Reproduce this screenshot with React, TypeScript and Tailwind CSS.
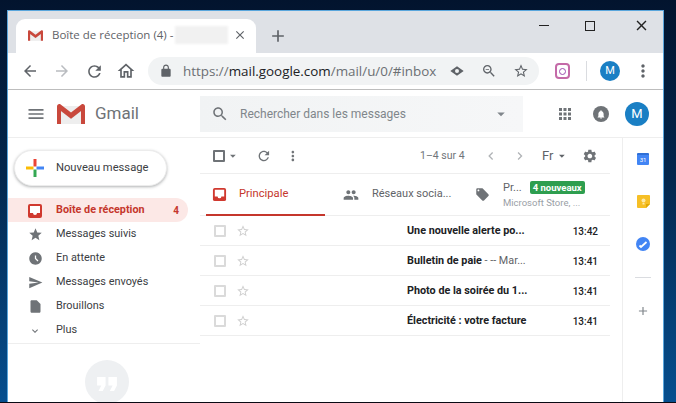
import type { ReactNode } from 'react';

const paths = {
  menu: 'M3 18h18v-2H3v2zm0-5h18v-2H3v2zm0-7v2h18V6H3z',
  search: 'M15.5 14h-.79l-.28-.27C15.41 12.59 16 11.11 16 9.5 16 5.91 13.09 3 9.5 3S3 5.91 3 9.5 5.91 16 9.5 16c1.61 0 3.09-.59 4.23-1.57l.27.28v.79l5 4.99L20.49 19l-4.99-5zm-6 0C7.01 14 5 11.99 5 9.5S7.01 5 9.5 5 14 7.01 14 9.5 11.99 14 9.5 14z',
  star: 'M12 17.27L18.18 21l-1.64-7.03L22 9.24l-7.19-.61L12 2 9.19 8.63 2 9.24l5.46 4.73L5.82 21z',
  starOutline: 'M22 9.24l-7.19-.62L12 2 9.19 8.63 2 9.24l5.46 4.73L5.82 21 12 17.27 18.18 21l-1.63-7.03L22 9.24zM12 15.4l-3.76 2.27 1-4.28-3.32-2.88 4.38-.38L12 6.1l1.71 4.04 4.38.38-3.32 2.88 1 4.28L12 15.4z',
  clock: 'M11.99 2C6.47 2 2 6.48 2 12s4.47 10 9.99 10C17.52 22 22 17.52 22 12S17.52 2 11.99 2zm3.3 14.71L11 12.41V7h2v4.59l3.71 3.71-1.42 1.41z',
  send: 'M2.01 21L23 12 2.01 3 2 10l15 2-15 2z',
  draft: 'M14 2H6c-1.1 0-2 .9-2 2v16c0 1.1.9 2 2 2h12c1.1 0 2-.9 2-2V8l-6-6z',
  people: 'M16 11c1.66 0 2.99-1.34 2.99-3S17.66 5 16 5c-1.66 0-3 1.34-3 3s1.34 3 3 3zm-8 0c1.66 0 2.99-1.34 2.99-3S9.66 5 8 5C6.34 5 5 6.34 5 8s1.34 3 3 3zm0 2c-2.33 0-7 1.17-7 3.5V19h14v-2.5c0-2.33-4.67-3.5-7-3.5zm8 0c-.29 0-.62.02-.97.05 1.16.84 1.97 1.97 1.97 3.45V19h6v-2.5c0-2.33-4.67-3.5-7-3.5z',
  tag: 'M21.41 11.58l-9-9C12.05 2.22 11.55 2 11 2H4c-1.1 0-2 .9-2 2v7c0 .55.22 1.05.59 1.42l9 9c.36.36.86.58 1.41.58.55 0 1.05-.22 1.41-.59l7-7c.37-.36.59-.86.59-1.41 0-.55-.23-1.06-.59-1.42zM5.5 7C4.67 7 4 6.33 4 5.5S4.67 4 5.5 4 7 4.67 7 5.5 6.33 7 5.5 7z',
  gear: 'M19.14 12.94c.04-.3.06-.61.06-.94 0-.32-.02-.64-.07-.94l2.03-1.58c.18-.14.23-.41.12-.61l-1.92-3.32c-.12-.22-.37-.29-.59-.22l-2.39.96c-.5-.38-1.03-.7-1.62-.94l-.36-2.54c-.04-.24-.24-.41-.48-.41h-3.84c-.24 0-.43.17-.47.41l-.36 2.54c-.59.24-1.13.57-1.62.94l-2.39-.96c-.22-.08-.47 0-.59.22L2.74 8.87c-.12.21-.08.47.12.61l2.03 1.58c-.05.3-.09.63-.09.94s.02.64.07.94l-2.03 1.58c-.18.14-.23.41-.12.61l1.92 3.32c.12.22.37.29.59.22l2.39-.96c.5.38 1.03.7 1.62.94l.36 2.54c.05.24.24.41.48.41h3.84c.24 0 .44-.17.47-.41l.36-2.54c.59-.24 1.13-.56 1.62-.94l2.39.96c.22.08.47 0 .59-.22l1.92-3.32c.12-.22.07-.47-.12-.61l-2.01-1.58zM12 15.6c-1.98 0-3.6-1.62-3.6-3.6s1.62-3.6 3.6-3.6 3.6 1.62 3.6 3.6-1.62 3.6-3.6 3.6z',
  refresh: 'M17.65 6.35C16.2 4.9 14.21 4 12 4c-4.42 0-7.99 3.58-7.99 8s3.57 8 7.99 8c3.73 0 6.84-2.55 7.73-6h-2.08c-.82 2.33-3.04 4-5.65 4-3.31 0-6-2.69-6-6s2.69-6 6-6c1.66 0 3.14.69 4.22 1.78L13 11h7V4l-2.35 2.35z',
  lock: 'M18 8h-1V6c0-2.76-2.24-5-5-5S7 3.24 7 6v2H6c-1.1 0-2 .9-2 2v10c0 1.1.9 2 2 2h12c1.1 0 2-.9 2-2V10c0-1.1-.9-2-2-2zM9 6c0-1.66 1.34-3 3-3s3 1.34 3 3v2H9V6z',
  back: 'M20 11H7.83l5.59-5.59L12 4l-8 8 8 8 1.41-1.41L7.83 13H20v-2z',
  forward: 'M12 4l-1.41 1.41L16.17 11H4v2h12.17l-5.58 5.59L12 20l8-8z',
  home: 'M12 5.69l5 4.5V18h-2v-6H9v6H7v-7.81l5-4.5M12 3L2 12h3v8h6v-6h2v6h6v-8h3L12 3z',
  dots: 'M12 8c1.1 0 2-.9 2-2s-.9-2-2-2-2 .9-2 2 .9 2 2 2zm0 2c-1.1 0-2 .9-2 2s.9 2 2 2 2-.9 2-2-.9-2-2-2zm0 6c-1.1 0-2 .9-2 2s.9 2 2 2 2-.9 2-2-.9-2-2-2z',
  grid: 'M4 8h4V4H4v4zm6 12h4v-4h-4v4zm-6 0h4v-4H4v4zm0-6h4v-4H4v4zm6 0h4v-4h-4v4zm6-10v4h4V4h-4zm-6 4h4V4h-4v4zm6 6h4v-4h-4v4zm0 6h4v-4h-4v4z',
  plus: 'M19 13h-6v6h-2v-6H5v-2h6V5h2v6h6v2z',
  close: 'M19 6.41L17.59 5 12 10.59 6.41 5 5 6.41 10.59 12 5 17.59 6.41 19 12 13.41 17.59 19 19 17.59 13.41 12z',
  caret: 'M7 10l5 5 5-5z',
  chevronL: 'M15.41 7.41L14 6l-6 6 6 6 1.41-1.41L10.83 12z',
  chevronR: 'M10 6L8.59 7.41 13.17 12l-4.58 4.59L10 18l6-6z',
  chevronD: 'M7.41 8.59L12 13.17l4.59-4.58L18 10l-6 6-6-6z',
  zoomOut: 'M15.5 14h-.79l-.28-.27C15.41 12.59 16 11.11 16 9.5 16 5.91 13.09 3 9.5 3S3 5.91 3 9.5 5.91 16 9.5 16c1.61 0 3.09-.59 4.23-1.57l.27.28v.79l5 4.99L20.49 19l-4.99-5zm-6 0C7.01 14 5 11.99 5 9.5S7.01 5 9.5 5 14 7.01 14 9.5 11.99 14 9.5 14zM7 9h5v1H7z',
  eye: 'M12 5L2 12l10 7 10-7-10-7zm0 10a3 3 0 1 1 0-6 3 3 0 0 1 0 6z',
  bell: 'M12 20c.9 0 1.6-.7 1.6-1.6h-3.2c0 .9.7 1.6 1.6 1.6zm4.5-4v-4c0-2.4-1.3-4.4-3.4-4.9V6.6c0-.6-.5-1.1-1.1-1.1s-1.1.5-1.1 1.1v.5C8.800 7.600 7.500 9.600 7.500 12v4l-1.200 1.200v.6h11.400v-.6L16.500 16z',
  quote: 'M6 17h3l2-4V7H5v6h3zm8 0h3l2-4V7h-6v6h3z',
};

function Icon({ name, className }: { name: keyof typeof paths; className: string }) {
  return (
    <svg viewBox="0 0 24 24" fill="currentColor" className={className}>
      <path d={paths[name]} />
    </svg>
  );
}

function InboxIcon({ className }: { className: string }) {
  return (
    <svg viewBox="0 0 16 16" className={className}>
      <rect x="1" y="1" width="14" height="14" rx="2" fill="#d0392f" />
      <path d="M3 3h10v7h-3a2 2 0 0 1-4 0H3z" fill="#fff" />
    </svg>
  );
}

function GmailM({ className }: { className: string }) {
  return (
    <svg viewBox="0 0 28 20" className={className}>
      <path d="M1 2h26v18H1z" fill="#eeeeee" />
      <path d="M1 2l13 10L27 2v3L14 15 1 5z" fill="#d9d9d9" />
      <path d="M0 2.500C0 1 1 0 2.300 0H3l11 8.500L25 0h.7C27 0 28 1 28 2.500V20h-4V7l-10 7.800L4 7v13H0z" fill="#c9483c" />
    </svg>
  );
}

function ToolbarSlot({ width, children }: { width: string; children: ReactNode }) {
  return <div className={`flex shrink-0 items-center justify-center ${width}`}>{children}</div>;
}

const navItems: { label: string; icon: keyof typeof paths }[] = [
  { label: 'Messages suivis', icon: 'star' },
  { label: 'En attente', icon: 'clock' },
  { label: 'Messages envoyés', icon: 'send' },
  { label: 'Brouillons', icon: 'draft' },
  { label: 'Plus', icon: 'chevronD' },
];

const mails = [
  { subject: 'Une nouvelle alerte po...', time: '13:42' },
  { subject: 'Bulletin de paie', extra: ' - -- Mar...', time: '13:41' },
  { subject: 'Photo de la soirée du 1...', time: '13:41' },
  { subject: 'Électricité : votre facture', time: '13:41' },
];

export default function App() {
  return (
    <div className="h-[403px] w-[676px] overflow-hidden border-b border-[#0a0a14] bg-[linear-gradient(180deg,#02142e_0%,#03284f_45%,#064f8f_100%)] pl-[7px] pt-[10px] font-['Roboto',sans-serif]">
      <div className="flex h-[392px] w-[657px] flex-col overflow-hidden border-x border-t border-[#5aa6dc] bg-white">
        {/* tab strip */}
        <div className="flex h-[42px] shrink-0 items-end bg-[#dee1e6] pl-[8px]">
          <div className="flex h-[34px] w-[240px] shrink-0 items-center rounded-t-[9px] bg-white pb-[2px] pl-[12px]">
            <GmailM className="h-[11px] w-[15px] shrink-0" />
            <span className="ml-[9px] whitespace-nowrap font-['Open_Sans',sans-serif] text-[11.5px] text-[#5f6368]">Boîte de réception (4) -</span>
            <div className="ml-[2px] h-[18px] w-[53px] shrink-0 bg-[#f1f1f1] blur-[1px]" />
            <Icon name="close" className="ml-[5px] h-[14px] w-[14px] text-[#5f6368]" />
          </div>
          <Icon name="plus" className="mb-[7px] ml-[12px] h-[20px] w-[20px] text-[#5f6368]" />
          <div className="mb-[19px] ml-auto flex items-center">
            <ToolbarSlot width="w-[34px]"><div className="h-px w-[10px] bg-[#222]" /></ToolbarSlot>
            <ToolbarSlot width="w-[58px]"><div className="h-[10px] w-[10px] border border-[#222]" /></ToolbarSlot>
            <ToolbarSlot width="w-[44px]"><Icon name="close" className="h-[17px] w-[17px] text-[#222]" /></ToolbarSlot>
          </div>
        </div>

        {/* browser toolbar */}
        <div className="flex h-[37px] shrink-0 items-center border-b border-[#bdbdbd] pl-[6px]">
          <ToolbarSlot width="w-[32px]"><Icon name="back" className="h-[18px] w-[18px] text-[#5f6368]" /></ToolbarSlot>
          <ToolbarSlot width="w-[32px]"><Icon name="forward" className="h-[18px] w-[18px] text-[#b9bcc0]" /></ToolbarSlot>
          <ToolbarSlot width="w-[32px]"><Icon name="refresh" className="h-[19px] w-[19px] text-[#5f6368]" /></ToolbarSlot>
          <ToolbarSlot width="w-[32px]"><Icon name="home" className="h-[20px] w-[20px] text-[#5f6368]" /></ToolbarSlot>
          <div className="ml-[6px] flex h-[28px] w-[391px] shrink-0 items-center rounded-full bg-[#f1f3f4] pl-[11px]">
            <Icon name="lock" className="h-[14px] w-[14px] text-[#5f6368]" />
            <span className="ml-[10px] w-[266px] whitespace-nowrap font-['Open_Sans',sans-serif] text-[13.4px] text-[#6b6f73]">
              https://<span className="text-[#202124]">mail.google.com</span>/mail/u/0/#inbox
            </span>
            <Icon name="eye" className="h-[16px] w-[16px] text-[#5f6368]" />
            <Icon name="zoomOut" className="ml-[16px] h-[16px] w-[16px] text-[#5f6368]" />
            <Icon name="starOutline" className="ml-[16px] h-[16px] w-[16px] text-[#5f6368]" />
          </div>
          <div className="ml-[16px] flex h-[16px] w-[15px] shrink-0 items-center justify-center rounded-[4px] border-2 border-[#c46aa8]">
            <div className="h-[7px] w-[7px] rounded-full border border-[#9b4fb0]" />
          </div>
          <div className="ml-[16px] h-[20px] w-px bg-[#dadce0]" />
          <div className="ml-[13px] flex h-[20px] w-[20px] shrink-0 items-center justify-center rounded-full bg-[#1a7fc4] text-[11px] text-white">M</div>
          <Icon name="dots" className="ml-[13px] h-[20px] w-[20px] text-[#5f6368]" />
        </div>

        {/* gmail header */}
        <div className="flex h-[48px] shrink-0 items-center border-b border-[#eeeeee]">
          <ToolbarSlot width="w-[55px]"><Icon name="menu" className="h-[20px] w-[20px] text-[#6f7377]" /></ToolbarSlot>
          <GmailM className="ml-[-6px] h-[20px] w-[28px] shrink-0" />
          <span className="ml-[10px] text-[17px] text-[#6f7276]">Gmail</span>
          <div className="ml-[61px] flex h-[36px] w-[323px] shrink-0 items-center bg-[linear-gradient(90deg,#f1f3f4,#f6f7f8)] pl-[11px]">
            <Icon name="search" className="h-[18px] w-[18px] text-[#6f7377]" />
            <span className="ml-[11px] w-[252px] text-[12px] text-[#80868b]">Rechercher dans les messages</span>
            <Icon name="caret" className="h-[18px] w-[18px] text-[#80868b]" />
          </div>
          <Icon name="grid" className="ml-[33px] h-[18px] w-[18px] text-[#6f7377]" />
          <div className="ml-[19px] flex h-[16px] w-[16px] items-center justify-center rounded-full bg-[#6f7377]">
            <Icon name="bell" className="h-[14px] w-[14px] text-white" />
          </div>
          <div className="ml-[16px] flex h-[24px] w-[24px] shrink-0 items-center justify-center rounded-full bg-[#1a7fc4] text-[13px] text-white">M</div>
        </div>

        <div className="flex min-h-0 flex-1">
          {/* sidebar */}
          <div className="flex w-[192px] shrink-0 flex-col">
            <div className="ml-[6px] mt-[12px] flex h-[36px] w-[153px] shrink-0 items-center rounded-full border border-[#ececec] bg-white pl-[11px] shadow-[0_1px_3px_rgba(60,64,67,0.4)]">
              <svg viewBox="0 0 18 18" className="h-[18px] w-[18px]">
                <path d="M7.500 0h3v7.500H7.500z" fill="#ea4335" />
                <path d="M10.500 7.500H18v3h-7.500z" fill="#4285f4" />
                <path d="M7.500 10.500h3V18h-3z" fill="#34a853" />
                <path d="M0 7.500h7.500v3H0z" fill="#fbbc04" />
              </svg>
              <span className="ml-[12px] text-[11.2px] text-[#3c4043]">Nouveau message</span>
            </div>
            <div className="mt-[12px] flex h-[24px] w-[180px] shrink-0 items-center rounded-r-full bg-[#fce8e6] pl-[19px] pr-[9px] pt-[1px]">
              <InboxIcon className="h-[16px] w-[16px] shrink-0" />
              <span className="ml-[13px] text-[10.8px] font-bold text-[#c5362c]">Boîte de réception</span>
              <span className="ml-auto text-[10px] font-bold text-[#c5362c]">4</span>
            </div>
            {navItems.map((item) => (
              <div key={item.label} className="flex h-[24px] shrink-0 items-center pl-[19px] pt-[1px]">
                <div className="flex w-[16px] justify-center">
                  <Icon name={item.icon} className={item.icon === 'chevronD' ? 'h-[12px] w-[12px] text-[#6f7377]' : 'h-[15px] w-[15px] text-[#6f7377]'} />
                </div>
                <span className="ml-[13px] text-[10.9px] text-[#3c4043]">{item.label}</span>
              </div>
            ))}
            <div className="h-[2px] shrink-0 border-b border-[#eeeeee]" />
            <div className="ml-[77px] mt-[16px] flex h-[44px] w-[44px] shrink-0 items-center justify-center rounded-full bg-[#eef0f2] pt-[4px]">
              <Icon name="quote" className="h-[34px] w-[34px] text-white" />
            </div>
          </div>

          {/* message list */}
          <div className="flex w-[410px] shrink-0 flex-col">
            <div className="flex h-[36px] shrink-0 items-center border-b border-[#eeeeee] pl-[13px] pr-[12px]">
              <div className="h-[12px] w-[12px] rounded-[1px] border-2 border-[#6f7377]" />
              <Icon name="caret" className="ml-[1px] h-[14px] w-[14px] text-[#6f7377]" />
              <Icon name="refresh" className="ml-[16px] h-[16px] w-[16px] text-[#6f7377]" />
              <Icon name="dots" className="ml-[14px] h-[16px] w-[16px] text-[#6f7377]" />
              <span className="ml-[119px] whitespace-nowrap text-[10.5px] text-[#70757a]">1–4 sur 4</span>
              <Icon name="chevronL" className="ml-[18px] h-[16px] w-[16px] text-[#b0b3b6]" />
              <Icon name="chevronR" className="ml-[14px] h-[16px] w-[16px] text-[#b0b3b6]" />
              <span className="ml-[14px] text-[13px] text-[#5f6368]">Fr</span>
              <Icon name="caret" className="ml-[1px] h-[14px] w-[14px] text-[#5f6368]" />
              <Icon name="gear" className="ml-[14px] h-[16px] w-[16px] text-[#6f7377]" />
            </div>

            <div className="flex h-[42px] shrink-0 border-b border-[#eeeeee] pl-[6px]">
              <div className="flex h-[42px] w-[119px] shrink-0 items-center border-b-2 border-[#c5362c] pl-[6px] pt-[1px]">
                <InboxIcon className="h-[15px] w-[15px] shrink-0" />
                <span className="ml-[12px] text-[11.2px] text-[#c5362c]">Principale</span>
              </div>
              <div className="flex w-[132px] shrink-0 items-center pl-[18px]">
                <Icon name="people" className="h-[16px] w-[16px] text-[#6f7377]" />
                <span className="ml-[13px] whitespace-nowrap text-[11px] text-[#5f6368]">Réseaux socia...</span>
              </div>
              <div className="flex items-center pl-[18px]">
                <Icon name="tag" className="h-[15px] w-[15px] text-[#6f7377]" />
                <div className="ml-[13px] flex flex-col">
                  <div className="flex items-center">
                    <span className="text-[11px] leading-[14px] text-[#5f6368]">Pr...</span>
                    <span className="ml-[8px] rounded-[2px] bg-[#2e9e4f] px-[3px] text-[9.5px] font-bold leading-[13px] text-white">4 nouveaux</span>
                  </div>
                  <span className="mt-[2px] whitespace-nowrap text-[9.5px] leading-[12px] text-[#9aa0a6]">Microsoft Store, ...</span>
                </div>
              </div>
            </div>

            {mails.map((mail) => (
              <div key={mail.time + mail.subject} className="flex h-[30px] shrink-0 items-center border-b border-[#eeeeee] pl-[14px] pr-[12px] pt-[1px]">
                <div className="h-[12px] w-[12px] rounded-[1px] border-2 border-[#dadada]" />
                <Icon name="starOutline" className="ml-[10px] h-[14px] w-[14px] text-[#cfcfcf]" />
                <span className="ml-[157px] whitespace-nowrap text-[10.8px] font-bold text-[#202124]">
                  {mail.subject}
                  {mail.extra && <span className="font-normal text-[#5f6368]">{mail.extra}</span>}
                </span>
                <span className="ml-auto text-[10px] font-medium text-[#202124]">{mail.time}</span>
              </div>
            ))}
          </div>

          {/* side rail */}
          <div className="ml-[12px] flex min-w-0 flex-1 flex-col items-center border-l border-[#eeeeee] pt-[15px]">
            <div className="flex h-[12px] w-[12px] items-center justify-center rounded-[1px] border-t-2 border-[#2f6fd6] bg-[#4285f4] text-[6px] leading-none text-white">31</div>
            <svg viewBox="0 0 13 13" className="mt-[30px] h-[13px] w-[13px]">
              <path d="M1 0h11a1 1 0 0 1 1 1v8l-4 4H1a1 1 0 0 1-1-1V1a1 1 0 0 1 1-1z" fill="#f6bf26" />
              <path d="M9 13V9h4z" fill="#e0a800" />
              <circle cx="6.500" cy="5.500" r="2" fill="#fde9a8" />
              <path d="M5.500 8h2v1.500h-2z" fill="#fde9a8" />
            </svg>
            <svg viewBox="0 0 14 14" className="mt-[29px] h-[14px] w-[14px]">
              <circle cx="7" cy="7" r="7" fill="#4285f4" />
              <path d="M3.500 8.500l1.500 1.500 5.500-5" stroke="#fff" strokeWidth="1.800" fill="none" />
            </svg>
            <div className="mt-[26px] h-px w-[16px] bg-[#dadce0]" />
            <Icon name="plus" className="mt-[26px] h-[14px] w-[14px] text-[#80868b]" />
          </div>
        </div>
      </div>
    </div>
  );
}
